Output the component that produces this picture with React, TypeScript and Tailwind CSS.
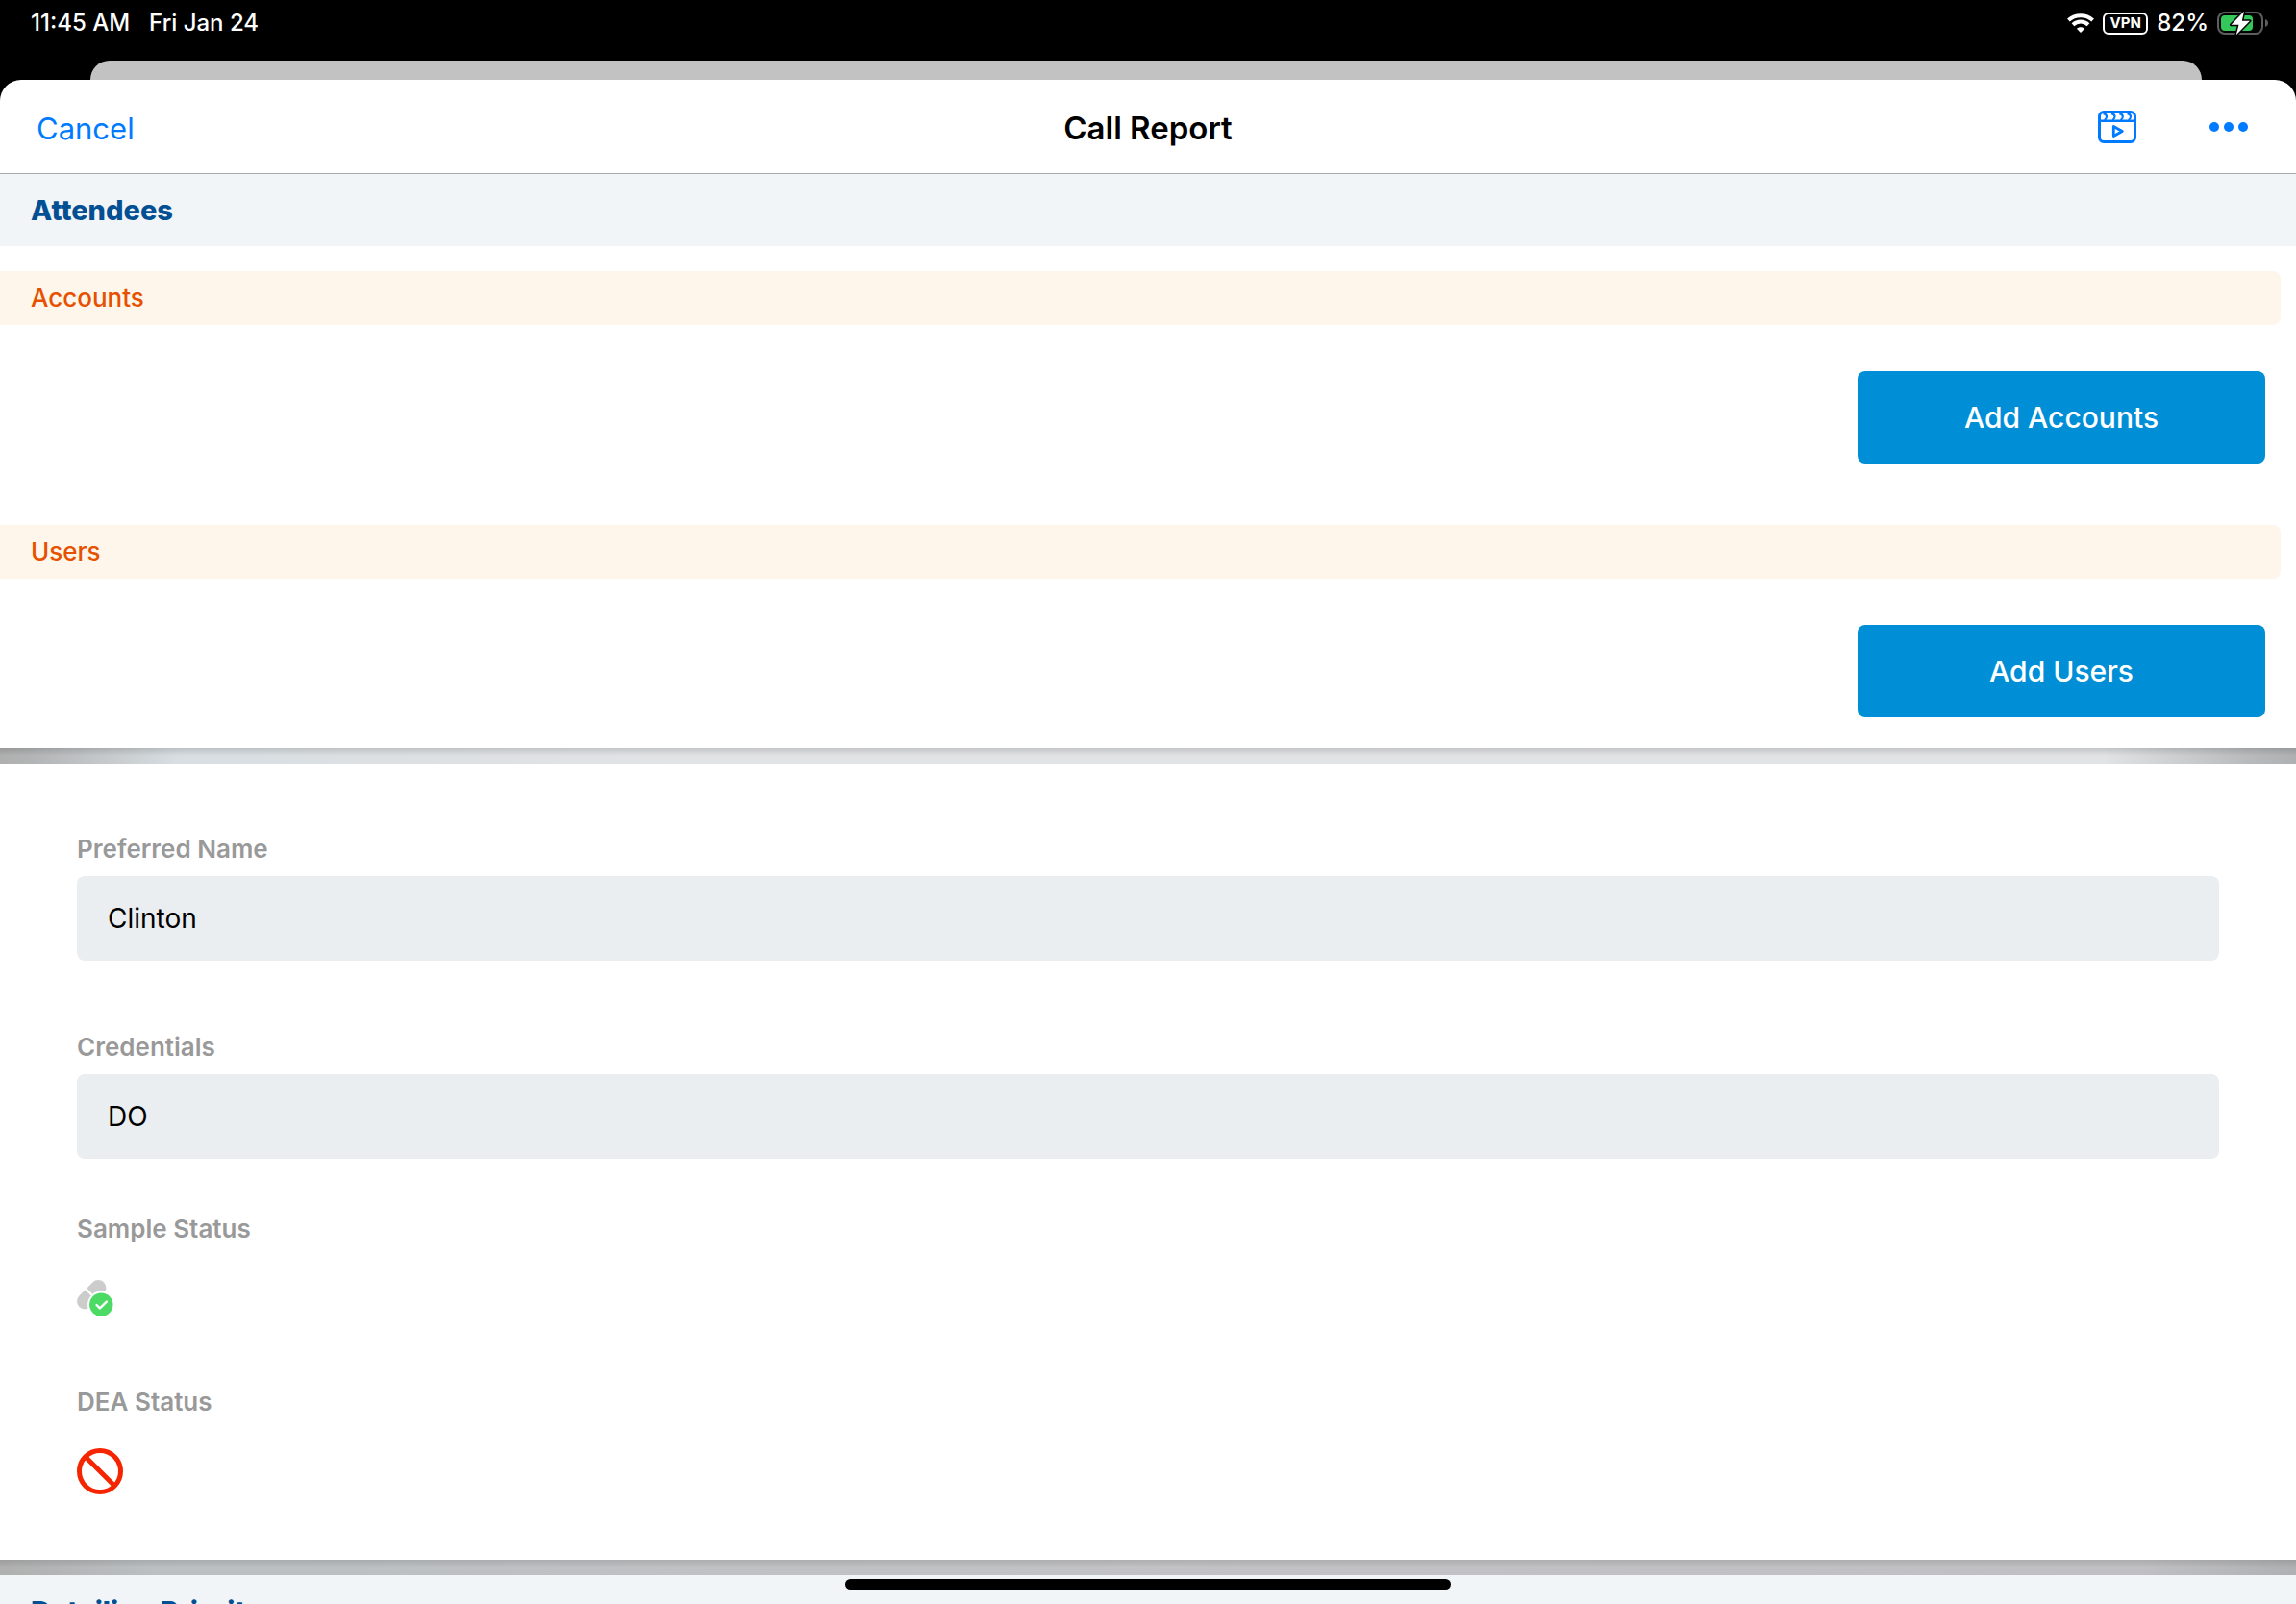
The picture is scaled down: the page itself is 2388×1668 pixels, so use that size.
import type { ReactNode } from "react";

function WifiIcon() {
  return (
    <svg width="28" height="20" viewBox="0 0 28 20" fill="none" stroke="#fff" aria-hidden="true">
      <path d="M1.4 7C8.400 .5 19.600 .5 26.600 7" strokeWidth="4" />
      <path d="M6 11.700c4.600-4.200 11.400-4.200 16 0" strokeWidth="4" />
      <path d="M14 20l-4.200-4.200c2.400-2.200 6-2.200 8.400 0z" fill="#fff" stroke="none" />
    </svg>
  );
}

function BatteryIcon() {
  return (
    <svg width="54" height="26" viewBox="0 0 54 26" fill="none" aria-hidden="true">
      <rect x="1" y="2" width="46" height="22" rx="7" stroke="#5e5e60" strokeWidth="2" />
      <path d="M50 9c4 1.300 4 6.700 0 8z" fill="#5e5e60" />
      <rect x="4" y="5" width="33" height="16" rx="4" fill="#34c759" />
      <path
        d="M28 .8L14.500 14.800h8L19.800 25.200 34 10.800h-8.200z"
        fill="#fff"
        stroke="#000"
        strokeWidth="3"
        strokeLinejoin="round"
        paintOrder="stroke"
      />
    </svg>
  );
}

function ClipIcon() {
  return (
    <svg width="40" height="34" viewBox="0 0 40 34" fill="none" stroke="#007aff" aria-hidden="true">
      <rect x="1.500" y="1.500" width="37" height="31" rx="4.500" strokeWidth="3" />
      <path d="M2 10.700h36" strokeWidth="2.600" />
      <path
        d="M5.500 3.200c4.400.8 4.600 4.400 1.300 7M14 3.200c4.400.8 4.600 4.400 1.300 7M22.300 3.200c4.400.8 4.600 4.400 1.300 7M30.500 3.200c4.400.8 4.600 4.400 1.300 7"
        strokeWidth="2.200"
      />
      <path d="M16.300 16.500v10l9-5z" strokeWidth="2.800" strokeLinejoin="round" />
    </svg>
  );
}

function MoreIcon() {
  return (
    <svg width="40" height="10" viewBox="0 0 40 10" fill="#007aff" aria-hidden="true">
      <circle cx="5" cy="5" r="5" />
      <circle cx="20" cy="5" r="5" />
      <circle cx="35" cy="5" r="5" />
    </svg>
  );
}

function SampleOkIcon() {
  return (
    <svg width="38" height="38" viewBox="0 0 38 38" fill="none" role="img" aria-label="Samples allowed">
      <path d="M8.200 22.200L22.200 8.200" stroke="#ccc" strokeWidth="16.400" strokeLinecap="round" />
      <path d="M8.500 8.500l14 14" stroke="#fff" strokeWidth="2.400" />
      <circle cx="25.300" cy="25.700" r="14.200" fill="#fff" />
      <circle cx="25.300" cy="25.700" r="12.200" fill="#4cd964" />
      <path d="M20.500 26l3.400 3.400 7-6.800" stroke="#fff" strokeWidth="2.400" strokeLinecap="round" strokeLinejoin="round" />
    </svg>
  );
}

function ProhibitedIcon() {
  return (
    <svg width="48" height="48" viewBox="0 0 48 48" fill="none" stroke="#f42500" strokeWidth="5" role="img" aria-label="Not allowed">
      <circle cx="24" cy="24" r="21.500" />
      <path d="M9 9l30 30" />
    </svg>
  );
}

function SectionTitle({ children }: { children: ReactNode }) {
  return (
    <h2 className="bg-[#f1f5f8] px-8 py-5 text-[29px] leading-[35px] font-extrabold text-[#034f94]">{children}</h2>
  );
}

function AttendeeGroup({ title, action }: { title: string; action: string }) {
  return (
    <section>
      <h3 className="mr-4 rounded-r-lg bg-[#fef6ea] px-8 py-3 text-[26px] leading-8 font-medium text-[#e65100]">
        {title}
      </h3>
      <div className="flex justify-end px-8 pt-12">
        <button
          type="button"
          className="h-24 w-[424px] rounded-lg bg-[#008fd7] text-[30px] leading-9 font-medium text-white"
        >
          {action}
        </button>
      </div>
    </section>
  );
}

function ReadOnlyField({ id, label, value }: { id: string; label: string; value: string }) {
  return (
    <div className="flex flex-col gap-3">
      <label htmlFor={id} className="text-[26px] leading-8 font-semibold text-[#999]">
        {label}
      </label>
      <input
        id={id}
        readOnly
        defaultValue={value}
        className="h-[88px] w-full rounded-lg bg-[#eaeef1] px-8 text-[28px] text-black outline-none"
      />
    </div>
  );
}

function StatusField({ label, children }: { label: string; children: ReactNode }) {
  return (
    <div className="flex flex-col gap-4">
      <h3 className="text-[26px] leading-8 font-semibold text-[#999]">{label}</h3>
      <div className="flex h-20 items-center">{children}</div>
    </div>
  );
}

export default function App() {
  return (
    <div className="flex h-screen flex-col overflow-hidden bg-black font-['Inter',sans-serif]">
      <div className="flex h-[63px] shrink-0 items-start justify-between pt-2 pr-7 pl-8 text-[24px] leading-8 text-white">
        <div className="flex gap-5 font-medium">
          <span>11:45 AM</span>
          <span>Fri Jan 24</span>
        </div>
        <div className="flex h-8 items-center gap-[9px]">
          <WifiIcon />
          <span className="flex h-[23px] w-[47px] items-center justify-center rounded-md border-2 border-white text-[15px] leading-4 font-bold">
            VPN
          </span>
          <span className="font-medium">82%</span>
          <BatteryIcon />
        </div>
      </div>
      <div className="mr-[98px] ml-[94px] h-5 shrink-0 rounded-t-[20px] bg-[#c2c2c2]" />
      <div className="flex min-h-0 flex-1 flex-col overflow-hidden rounded-t-[22px] bg-white">
        <header className="grid h-[98px] shrink-0 grid-cols-[1fr_auto_1fr] items-center border-b border-[#a7abaf] px-[38px]">
          <button type="button" className="justify-self-start pt-1 text-[31px] leading-10 text-[#007aff]">
            Cancel
          </button>
          <h1 className="pt-[2px] text-[33px] leading-10 font-semibold text-black">Call Report</h1>
          <div className="flex items-center gap-[76px] justify-self-end pr-3">
            <button type="button" aria-label="Play media">
              <ClipIcon />
            </button>
            <button type="button" aria-label="More actions">
              <MoreIcon />
            </button>
          </div>
        </header>
        <main className="min-h-0 flex-1 overflow-hidden">
          <section className="pb-8">
            <SectionTitle>Attendees</SectionTitle>
            <div className="flex flex-col gap-16 pt-[26px]">
              <AttendeeGroup title="Accounts" action="Add Accounts" />
              <AttendeeGroup title="Users" action="Add Users" />
            </div>
          </section>
          <div className="h-4 bg-[linear-gradient(to_bottom,rgba(0,0,0,0.13),rgba(0,0,0,0)_50%),linear-gradient(to_right,#afafaf,#b4b6b7_40px,#d8dee2_185px,#e2e3e5_700px,#e2e3e5_calc(100%-200px),#b9babc_calc(100%-50px),#afb0b2)]" />
          <section className="flex flex-col px-20 pt-[73px] pb-[52px]">
            <div className="flex flex-col gap-[74px]">
              <ReadOnlyField id="preferred-name" label="Preferred Name" value="Clinton" />
              <ReadOnlyField id="credentials" label="Credentials" value="DO" />
            </div>
            <div className="flex flex-col gap-[52px] pt-[57px]">
              <StatusField label="Sample Status">
                <SampleOkIcon />
              </StatusField>
              <StatusField label="DEA Status">
                <ProhibitedIcon />
              </StatusField>
            </div>
          </section>
          <div className="h-4 bg-[linear-gradient(to_bottom,rgba(0,0,0,0.1),rgba(0,0,0,0)_50%),linear-gradient(to_right,#afafaf,#bbbfc1_160px,#c2c2c4_50%,#c0c0c2_calc(100%-160px),#afb0b2)]" />
          <section>
            <SectionTitle>Detailing Priority</SectionTitle>
          </section>
        </main>
      </div>
      <div className="fixed bottom-[15px] left-1/2 h-[11px] w-[630px] -translate-x-1/2 rounded-full bg-black" />
    </div>
  );
}
